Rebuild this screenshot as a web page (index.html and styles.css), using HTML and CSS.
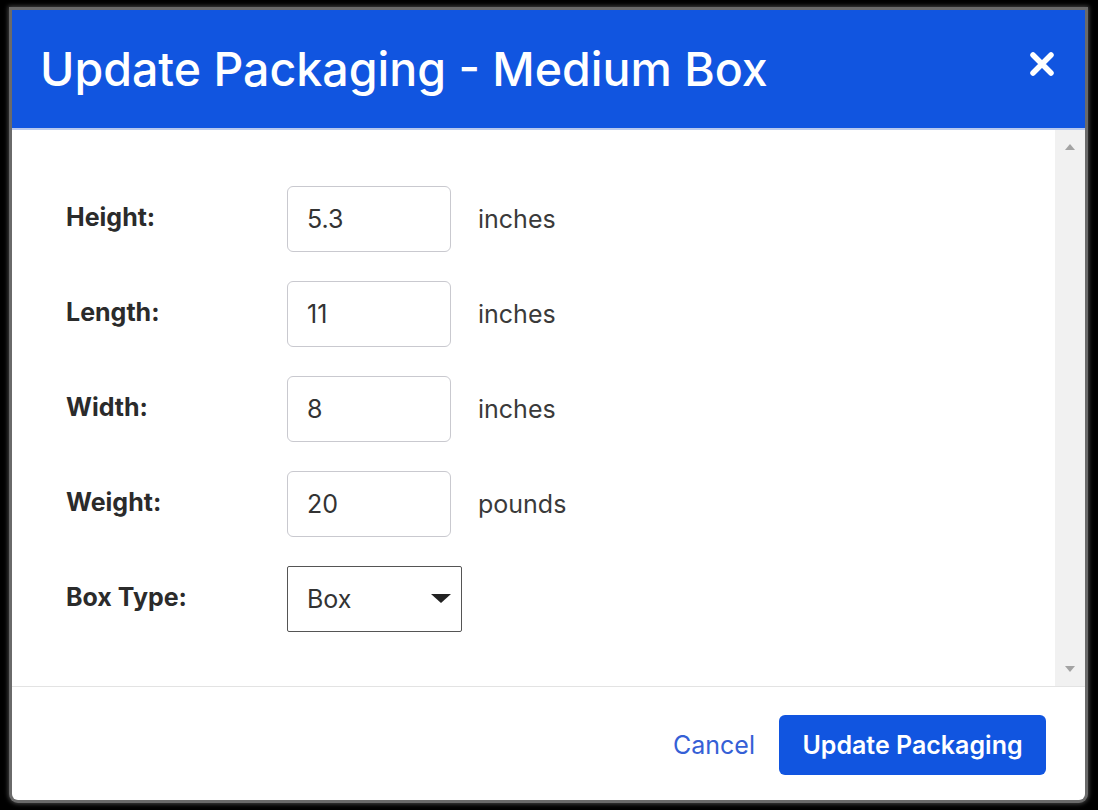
FILE: index.html
```html
<!DOCTYPE html>
<html lang="en">
<head>
<meta charset="utf-8">
<title>Update Packaging</title>
<link rel="stylesheet" href="styles.css">
</head>
<body>
<div class="frame">
  <div class="dialog">
    <header class="dialog-header">
      <h1 class="dialog-title">Update Packaging - Medium Box</h1>
      <button class="close-btn" aria-label="Close">
        <svg width="26" height="26" viewBox="0 0 26 26"><path d="M4 4 L22 22 M22 4 L4 22" stroke="#fff" stroke-width="5.5" stroke-linecap="round"/></svg>
      </button>
    </header>
    <div class="dialog-body">
      <div class="content">
        <div class="form-row">
          <label class="field-label">Height:</label>
          <div class="input">5.3</div>
          <span class="unit">inches</span>
        </div>
        <div class="form-row">
          <label class="field-label">Length:</label>
          <div class="input">11</div>
          <span class="unit">inches</span>
        </div>
        <div class="form-row">
          <label class="field-label">Width:</label>
          <div class="input">8</div>
          <span class="unit">inches</span>
        </div>
        <div class="form-row">
          <label class="field-label">Weight:</label>
          <div class="input">20</div>
          <span class="unit">pounds</span>
        </div>
        <div class="form-row">
          <label class="field-label">Box Type:</label>
          <div class="select">
            <span>Box</span>
            <svg width="20" height="10" viewBox="0 0 20 10"><path d="M0 0 H20 L10 9 Z" fill="#222"/></svg>
          </div>
        </div>
      </div>
      <div class="scrollbar">
        <svg width="10" height="6" viewBox="0 0 10 6"><path d="M0 6 L5 0 L10 6 Z" fill="#a3a3a3"/></svg>
        <svg width="10" height="6" viewBox="0 0 10 6"><path d="M0 0 L5 6 L10 0 Z" fill="#a3a3a3"/></svg>
      </div>
    </div>
    <footer class="dialog-footer">
      <a class="cancel" href="#">Cancel</a>
      <button class="primary-btn">Update Packaging</button>
    </footer>
  </div>
</div>
</body>
</html>
```
FILE: styles.css
```css
* { box-sizing: border-box; }
html, body { margin: 0; padding: 0; background: #000; }
body { font-family: Inter, "Noto Sans", sans-serif; }
.frame {
  width: 1098px;
  height: 810px;
  padding: 10px 13px 10px 12px;
}
.dialog {
  width: 1073px;
  height: 790px;
  background: #fff;
  display: flex;
  flex-direction: column;
  border-radius: 0 0 6px 6px;
  box-shadow: 0 0 0 3px #6a6a6a, 0 0 4px 4px #444;
  overflow: hidden;
}
.dialog-header {
  height: 120px;
  background: #1155e0;
  border-bottom: 2px solid #b9c9ee;
  display: flex;
  align-items: center;
  justify-content: space-between;
  padding: 0 30px 0 28px;
  flex: none;
}
.dialog-title {
  margin: 0;
  color: #fff;
  font-size: 46.5px;
  font-weight: 500;
  letter-spacing: 0;
}
.close-btn {
  background: none;
  border: 0;
  padding: 0;
  width: 26px;
  height: 26px;
  margin-top: -10px;
  display: flex;
}
.dialog-body {
  flex: none;
  height: 557px;
  display: flex;
  border-bottom: 1px solid #e3e3e3;
}
.content {
  flex: 1;
  padding: 56px 0 0 54px;
  display: flex;
  flex-direction: column;
  gap: 29px;
}
.form-row {
  display: flex;
  align-items: center;
  height: 66px;
}
.field-label {
  width: 221px;
  font-weight: 700;
  font-size: 25px;
  color: #2b2b2b;
  margin-top: -4px;
}
.input {
  width: 164px;
  height: 66px;
  border: 1px solid #c9c9cf;
  border-radius: 6px;
  padding-left: 19px;
  display: flex;
  align-items: center;
  font-size: 25px;
  color: #333;
}
.unit {
  margin-left: 27px;
  font-size: 25px;
  color: #3a3a3a;
}
.select {
  width: 175px;
  height: 66px;
  border: 1px solid #555;
  border-radius: 2px;
  padding: 0 10px 0 19px;
  display: flex;
  align-items: center;
  justify-content: space-between;
  font-size: 25px;
  color: #333;
}
.scrollbar {
  width: 30px;
  background: #f1f1f1;
  display: flex;
  flex-direction: column;
  justify-content: space-between;
  align-items: center;
  padding: 14px 0 14px;
}
.dialog-footer {
  flex: 1;
  display: flex;
  align-items: flex-start;
  justify-content: flex-end;
  padding: 28px 39px 0 0;
  gap: 24px;
}
.cancel {
  color: #3560d6;
  text-decoration: none;
  font-size: 25px;
  line-height: 60px;
}
.primary-btn {
  height: 60px;
  width: 267px;
  background: #1155e0;
  color: #fff;
  border: 0;
  border-radius: 6px;
  font-family: Inter, "Noto Sans", sans-serif;
  font-size: 25px;
  font-weight: 600;
}
```
